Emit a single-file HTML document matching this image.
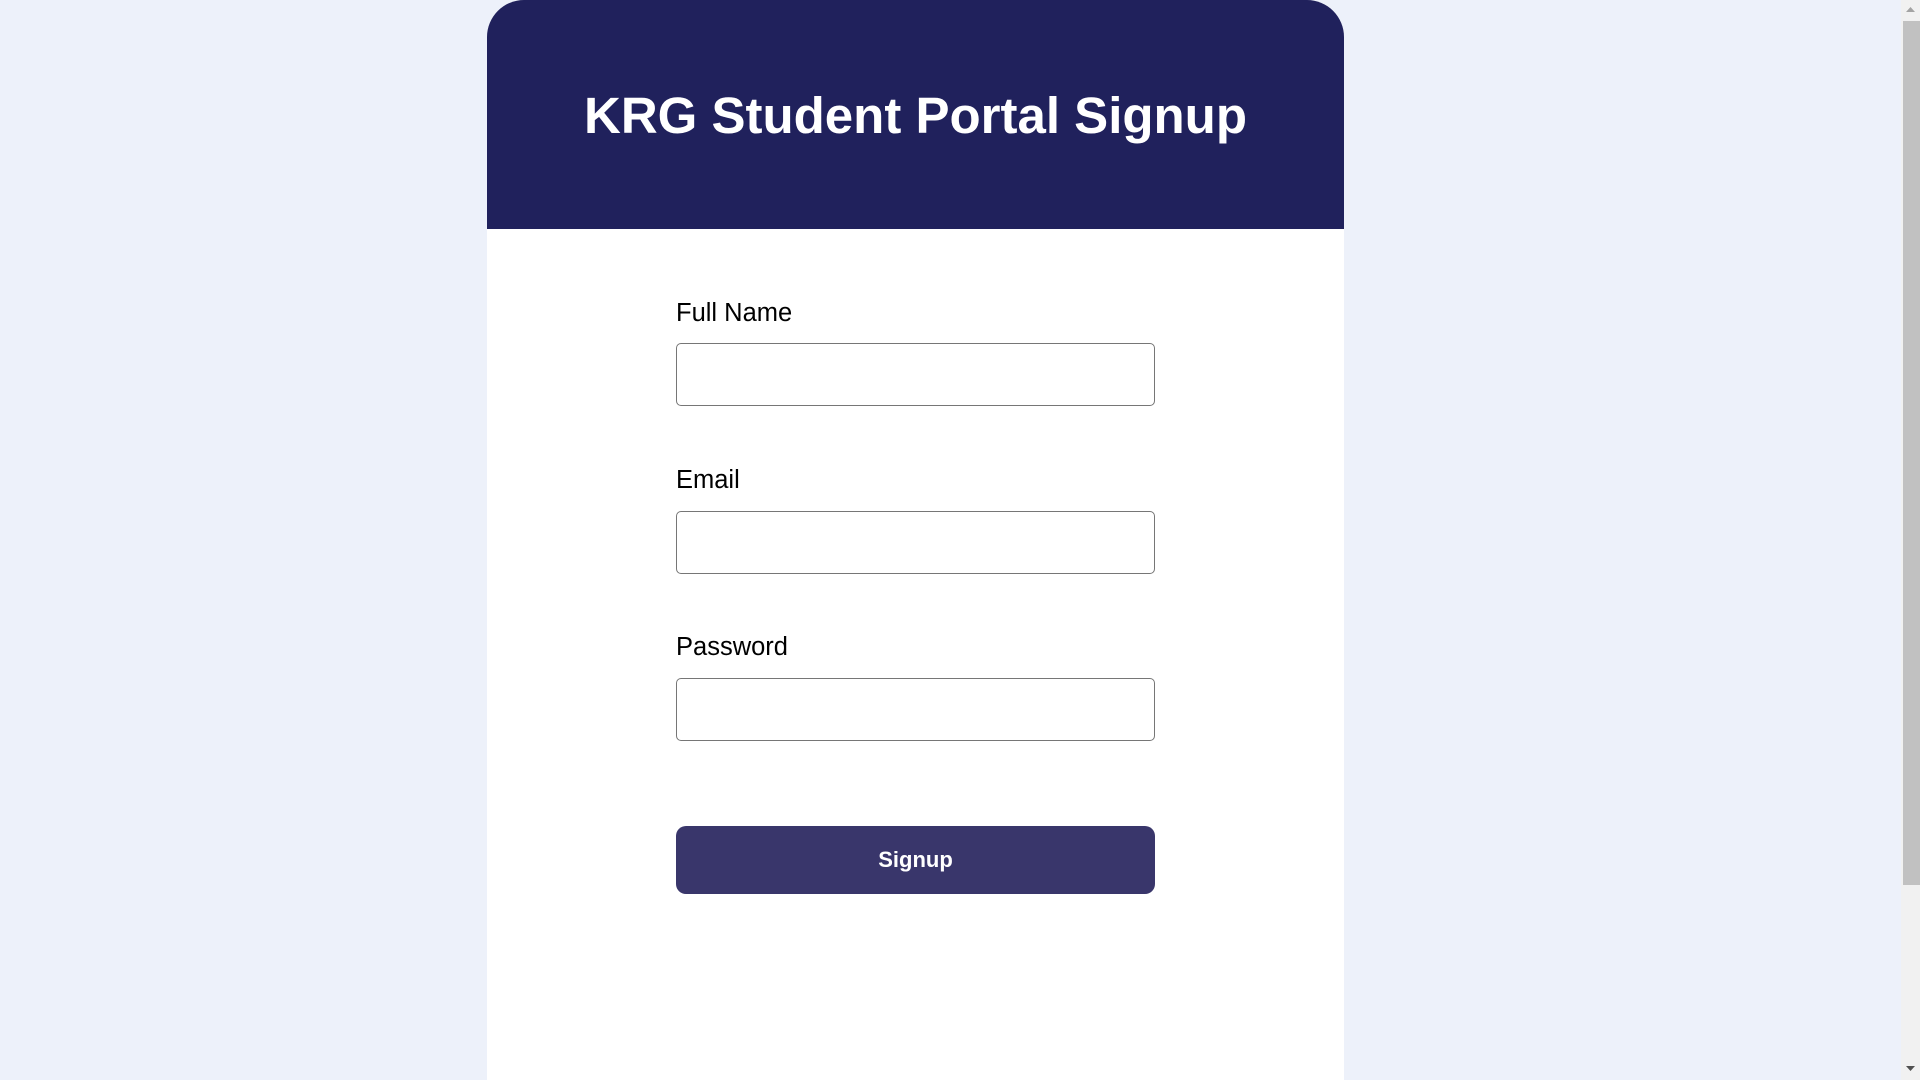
<!DOCTYPE html>
<html><head><meta charset="utf-8"><style>
html,body{margin:0;padding:0;width:1920px;height:1080px;overflow:hidden;background:#edf1fa;font-family:"Liberation Sans",Arial,sans-serif}
.card{position:absolute;left:487px;top:0;width:857px;height:1080px;background:#fff;border-radius:37px 37px 0 0;overflow:hidden}
.hdr{height:229px;background:#20215c;color:#fff;text-align:center}
.hdr h1{margin:0;font-size:51px;font-weight:bold;line-height:229px;position:relative;top:1px}
.lbl{position:absolute;left:189px;font-size:25.5px;color:#000}
.inp{position:absolute;left:189px;width:477px;height:61px;border:1px solid #767676;border-radius:5px}
.btn{position:absolute;left:189px;top:826px;width:479px;height:68px;background:#39366b;border-radius:10px;color:#fff;font-weight:bold;font-size:22px;text-align:center;line-height:68px}
.sb{position:absolute;right:0;top:0;width:19px;height:1080px;background:#f1f1f1}
.th{position:absolute;left:2px;top:21px;width:17px;height:864px;background:#c1c1c1}
</style></head><body>
<div class="card">
<div class="hdr"><h1>KRG Student Portal Signup</h1></div>
<div class="lbl" style="top:299px">Full Name</div>
<div class="inp" style="top:343px"></div>
<div class="lbl" style="top:466px">Email</div>
<div class="inp" style="top:511px"></div>
<div class="lbl" style="top:633px">Password</div>
<div class="inp" style="top:678px"></div>
<div class="btn">Signup</div>
</div>
<div class="sb"><div class="th"></div>
<svg style="position:absolute;left:5px;top:7px" width="9" height="6"><path d="M0 5L4.5 0L9 5Z" fill="#a3a3a3"/></svg>
<svg style="position:absolute;left:5px;top:1066px" width="9" height="6"><path d="M0 0L4.5 5L9 0Z" fill="#505050"/></svg>
</div>
</body></html>
